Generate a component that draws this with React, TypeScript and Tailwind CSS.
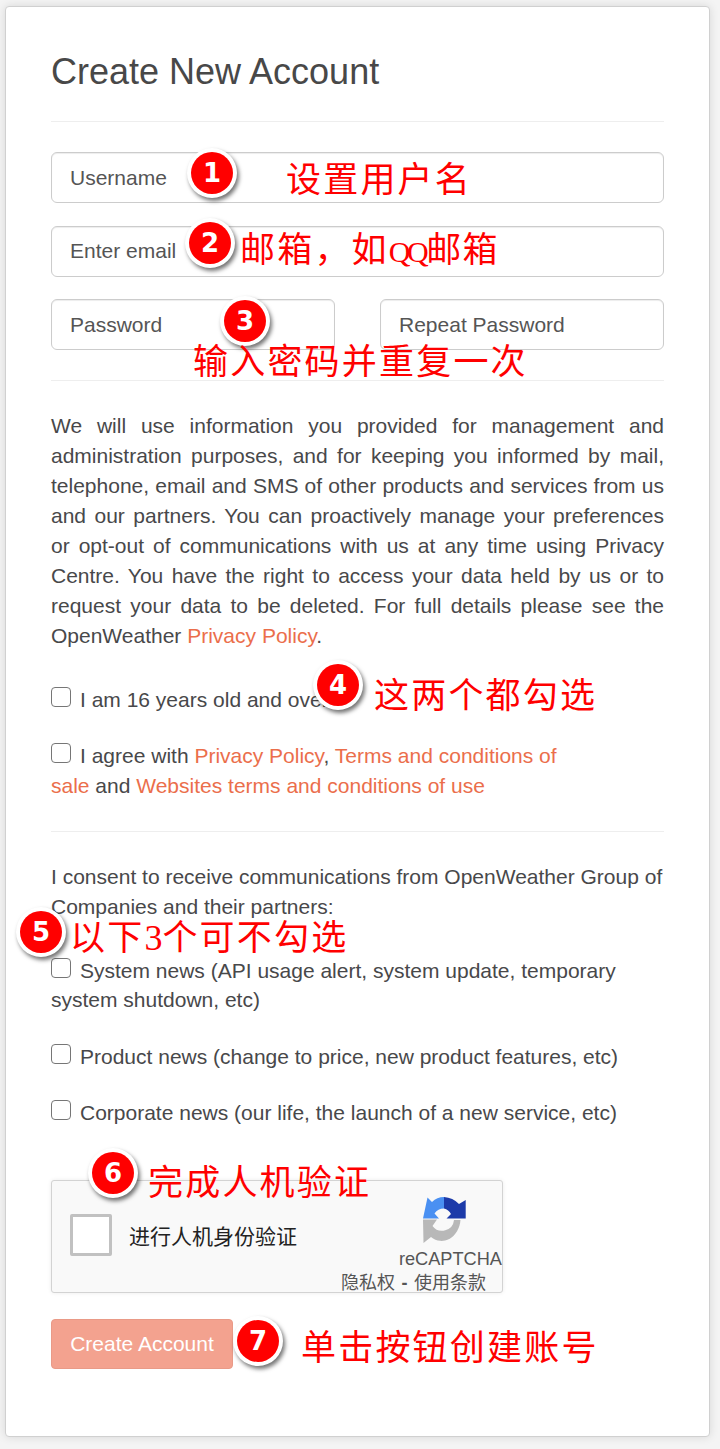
import React from 'react';

const sans = 'font-["Liberation_Sans","Noto_Sans_CJK_SC",sans-serif]';

function Badge({ n, className }: { n: string; className: string }) {
  return (
    <div className={`absolute w-[50px] h-[50px] rounded-full bg-white flex items-center justify-center shadow-[2px_3px_4px_rgba(0,0,0,0.55)] ${className}`}>
      <div className='w-[42px] h-[42px] rounded-full bg-[#ff0000] flex items-center justify-center text-white font-["DejaVu_Sans",sans-serif] font-bold text-[26px] leading-none'>
        {n}
      </div>
    </div>
  );
}

function Note({ children, className }: { children: React.ReactNode; className: string }) {
  return (
    <div className={`absolute whitespace-nowrap text-[#ff0000] font-["Noto_Sans_CJK_SC",sans-serif] text-[35px] leading-[40px] tracking-[2.2px] ${className}`}>
      {children}
    </div>
  );
}

function Latin({ children, className }: { children: React.ReactNode; className: string }) {
  return <span className={`font-["Liberation_Serif",serif] ${className}`}>{children}</span>;
}

function Field({ placeholder, className = '' }: { placeholder: string; className?: string }) {
  return (
    <div className={`h-[51px] flex items-center pl-[18px] bg-white border border-[#cccccc] rounded-[6px] text-[21px] text-[#555555] shadow-[inset_0_1px_1px_rgba(0,0,0,0.075)] ${className}`}>
      {placeholder}
    </div>
  );
}

function Box({ className = '' }: { className?: string }) {
  return <span className={`block w-[20px] h-[20px] rounded-[4px] border border-[#767676] bg-white ${className}`} />;
}

function Link({ children }: { children: React.ReactNode }) {
  return <span className="text-[#eb6e4b]">{children}</span>;
}

function RecaptchaLogo() {
  return (
    <svg viewBox="0 0 46 47" className="w-[46px] h-[47px]">
      <path d="M23 0A23 23 0 0 1 38 7L44.7 3V21.5H25.5L30 17A11.5 11.5 0 0 0 23 11.5Z" fill="#1c3aa9" />
      <path d="M23 0V11.5A11.5 11.5 0 0 0 13.5 16.5L18 21.5H2L6.5 0.5L11 5A17 17 0 0 1 23 0Z" fill="#4a90f2" />
      <path d="M2 22.5H16L11.5 29A12 12 0 0 0 33 23H39.5A19 23 0 0 1 10 40L2.5 46Z" fill="#b8b8b8" />
    </svg>
  );
}

export default function App() {
  return (
    <div className={`relative h-[1449px] overflow-hidden bg-[#f4f4f4] pt-[6px] pl-[5px] ${sans}`}>
      <div className="w-[705px] h-[1431px] bg-white border border-[#d0d0d0] rounded-[4px] shadow-[0_0_10px_rgba(0,0,0,0.12)] px-[45px] text-[#48484a]">
        <h1 className="pt-[40px] text-[36px] leading-[50px] text-[#484848]">Create New Account</h1>
        <div className="mt-[24px] border-t border-[#eeeeee]" />

        <div className="mt-[30px] flex flex-col gap-[22.5px]">
          <Field placeholder="Username" />
          <Field placeholder="Enter email" />
          <div className="flex gap-[45px]">
            <Field placeholder="Password" className="flex-1" />
            <Field placeholder="Repeat Password" className="flex-1" />
          </div>
        </div>
        <div className="mt-[30px] border-t border-[#eeeeee]" />

        <p className="mt-[30px] text-[21px] leading-[30px] text-justify">
          We will use information you provided for management and administration purposes, and for keeping you informed by mail, telephone, email and SMS of other products and services from us and our partners. You can proactively manage your preferences or opt-out of communications with us at any time using Privacy Centre. You have the right to access your data held by us or to request your data to be deleted. For full details please see the OpenWeather <Link>Privacy Policy</Link>.
        </p>

        <div className="mt-[34px] flex items-start text-[21px] leading-[30px]">
          <Box className="mt-[2px] mr-[9px]" />
          <span>I am 16 years old and over</span>
        </div>
        <div className="relative mt-[26px] text-[21px] leading-[30px] w-[540px]">
          <Box className="absolute left-0 top-[2px]" />
          <span className="pl-[29px]">I agree with <Link>Privacy Policy</Link>, <Link>Terms and conditions of sale</Link> and <Link>Websites terms and conditions of use</Link></span>
        </div>
        <div className="mt-[30px] border-t border-[#eeeeee]" />

        <p className="mt-[30px] text-[21px] leading-[30px]">
          I consent to receive communications from OpenWeather Group of Companies and their partners:
        </p>

        <div className="relative mt-[34px] text-[21px] leading-[29px]">
          <Box className="absolute left-0 top-[2px]" />
          <span className="pl-[29px]">System news (API usage alert, system update, temporary system shutdown, etc)</span>
        </div>
        <div className="mt-[28px] flex items-start text-[21px] leading-[29px]">
          <Box className="mt-[2px] mr-[9px]" />
          <span>Product news (change to price, new product features, etc)</span>
        </div>
        <div className="mt-[27px] flex items-start text-[21px] leading-[29px]">
          <Box className="mt-[2px] mr-[9px]" />
          <span>Corporate news (our life, the launch of a new service, etc)</span>
        </div>

        <div className="mt-[53px] w-[452px] h-[113px] flex bg-[#f9f9f9] border border-[#d3d3d3] rounded-[3px] shadow-[0_0_4px_rgba(0,0,0,0.08)] pl-[18px]">
          <div className="flex items-center h-[42px] mt-[33px]">
            <span className="block w-[42px] h-[42px] bg-white border-[3px] border-[#c1c1c1] rounded-[2px]" />
            <span className="ml-[17px] pt-[4px] text-[21px] leading-[30px] text-[#222222]">进行人机身份验证</span>
          </div>
          <div className="ml-auto pt-[16px] flex flex-col items-end">
            <div className="mr-[35px] h-[47px]">
              <RecaptchaLogo />
            </div>
            <div className="mt-[3px] text-[18.2px] leading-[24px] text-[#555555]">reCAPTCHA</div>
            <div className="mr-[16px] pt-[1px] text-[18px] leading-[22px] text-[#555555] whitespace-nowrap">隐私权<span className="mx-[1.5px] font-bold"> - </span>使用条款</div>
          </div>
        </div>

        <div className="mt-[26px] w-[182px] h-[50px] flex items-center justify-center bg-[#f3a28f] border border-[#e99a87] rounded-[4px] text-white text-[21px]">
          Create Account
        </div>
      </div>

      <Badge n="1" className="left-[187px] top-[148px]" />
      <Note className="left-[286px] top-[157px]">设置用户名</Note>
      <Badge n="2" className="left-[185px] top-[218px]" />
      <Note className="left-[240px] top-[227px]">邮箱，如<Latin className="text-[30px] tracking-[-3.5px] pr-[1px]">QQ</Latin><span className="tracking-[1.4px]">邮箱</span></Note>
      <Badge n="3" className="left-[220px] top-[296px]" />
      <Note className="left-[193px] top-[339px]">输入密码并重复一次</Note>
      <Badge n="4" className="left-[313px] top-[660px]" />
      <Note className="left-[374px] top-[673px]">这两个都勾选</Note>
      <Badge n="5" className="left-[16px] top-[907px]" />
      <Note className="left-[70px] top-[915px]">以下<Latin className="text-[36px] tracking-normal">3</Latin>个可不勾选</Note>
      <Badge n="6" className="left-[88px] top-[1148px]" />
      <Note className="left-[148px] top-[1160px]">完成人机验证</Note>
      <Badge n="7" className="left-[233px] top-[1316px]" />
      <Note className="left-[301px] top-[1325px]">单击按钮创建账号</Note>
    </div>
  );
}
